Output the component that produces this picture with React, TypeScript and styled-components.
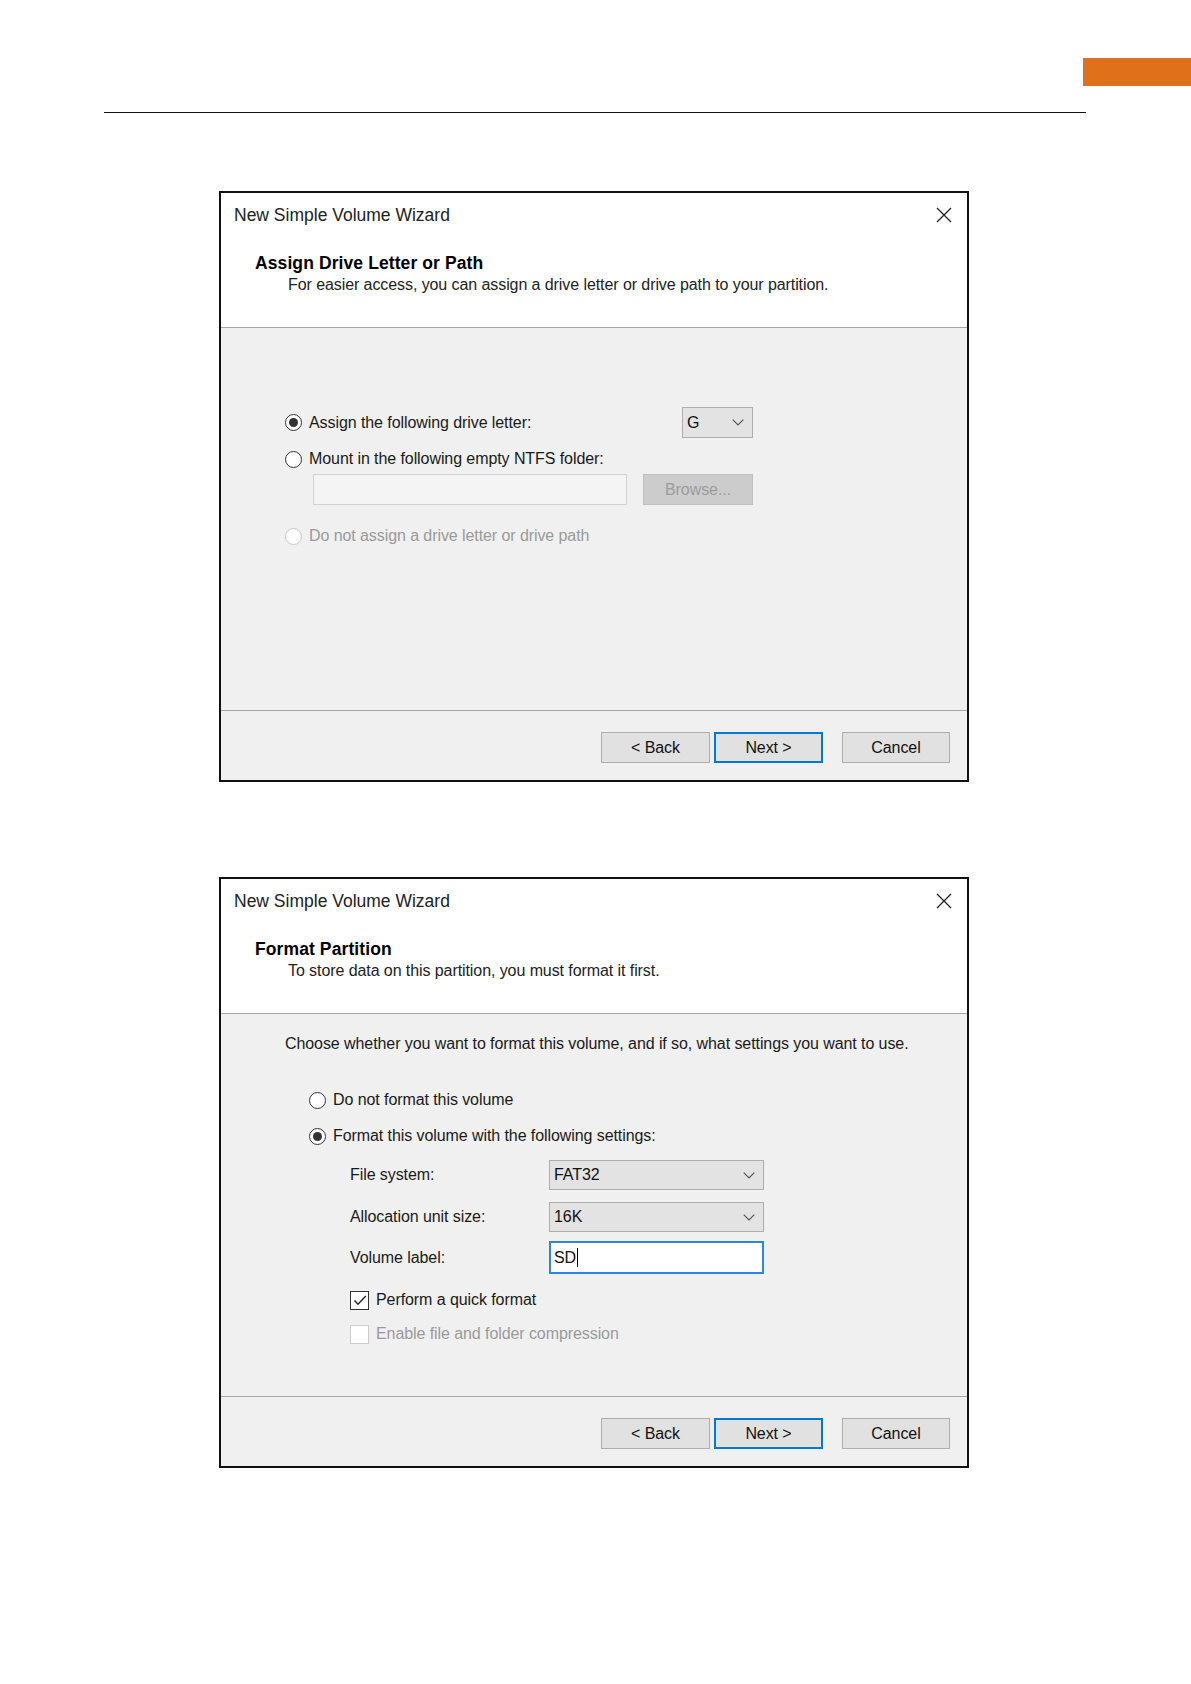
import React from 'react';
import styled, { createGlobalStyle } from 'styled-components';

const GlobalStyle = createGlobalStyle`
  html, body {
    margin: 0;
    padding: 0;
    background: #fff;
  }
  body {
    font-family: "Liberation Sans", Arial, sans-serif;
    color: #1a1a1a;
  }
`;

const Page = styled.div`
  padding: 58px 0 120px;
`;

const TopBar = styled.div`
  display: flex;
  justify-content: flex-end;
`;

const Accent = styled.div`
  width: 108px;
  height: 28px;
  background: #e07019;
`;

const Rule = styled.hr`
  margin: 26px 0 0 104px;
  width: 982px;
  height: 0;
  border: none;
  border-top: 1px solid #111;
`;

const Dialog = styled.section<{ $gap: number }>`
  box-sizing: border-box;
  width: 750px;
  height: 591px;
  margin: ${p => p.$gap}px 0 0 219px;
  border: 2px solid #111;
  background: #f0f0f0;
  display: flex;
  flex-direction: column;
  font-size: 16px;
  line-height: 20px;
  letter-spacing: -0.08px;
`;

const Header = styled.header`
  box-sizing: border-box;
  height: 135px;
  flex-shrink: 0;
  padding: 12px 15px 0 13px;
  background: #fff;
  border-bottom: 1px solid #a6a6a6;
`;

const TitleRow = styled.div`
  display: flex;
  align-items: center;
  justify-content: space-between;
  height: 20px;
`;

const Title = styled.div`
  font-size: 17.5px;
  letter-spacing: 0;
  color: #222;
`;

const Heading = styled.div`
  margin: 28px 0 0 21px;
  font-size: 17.5px;
  letter-spacing: 0.1px;
  font-weight: bold;
  color: #000;
`;

const Subheading = styled.div`
  margin: 2px 0 0 54px;
  color: #222;
`;

const Body = styled.div<{ $top?: number }>`
  flex: 1;
  padding: ${p => p.$top ?? 0}px 0 0 64px;
  color: #1a1a1a;
`;

const Row = styled.div<{ $mt: number; $indent?: number }>`
  display: flex;
  align-items: center;
  min-height: 22px;
  margin-top: ${p => p.$mt}px;
  padding-left: ${p => p.$indent ?? 0}px;
`;

const Option = styled.label<{ $disabled?: boolean; $w?: number }>`
  display: flex;
  align-items: center;
  gap: 7px;
  height: 22px;
  width: ${p => (p.$w ? `${p.$w}px` : 'auto')};
  flex-shrink: 0;
  color: ${p => (p.$disabled ? '#9a9a9a' : '#1a1a1a')};
`;

const RadioDot = styled.span<{ $checked?: boolean; $disabled?: boolean }>`
  box-sizing: border-box;
  width: 17px;
  height: 17px;
  border-radius: 50%;
  border: 1px solid ${p => (p.$disabled ? '#c8c8c8' : '#333')};
  background: #fff;
  display: inline-flex;
  align-items: center;
  justify-content: center;
  flex-shrink: 0;
  &::after {
    content: '';
    width: 9px;
    height: 9px;
    border-radius: 50%;
    background: #333;
    display: ${p => (p.$checked ? 'block' : 'none')};
  }
`;

const Box = styled.span<{ $disabled?: boolean }>`
  box-sizing: border-box;
  width: 19px;
  height: 19px;
  border: 1px solid ${p => (p.$disabled ? '#cccccc' : '#333')};
  background: #fff;
  display: inline-flex;
  align-items: center;
  justify-content: center;
  flex-shrink: 0;
`;

const Combo = styled.div<{ $w: number; $h: number }>`
  box-sizing: border-box;
  width: ${p => p.$w}px;
  height: ${p => p.$h}px;
  display: flex;
  align-items: center;
  justify-content: space-between;
  padding: 0 8px 0 4px;
  background: #e3e3e3;
  border: 1px solid #adadad;
  color: #111;
`;

const TextBox = styled.div<{ $w: number; $h: number; $focused?: boolean; $disabled?: boolean }>`
  box-sizing: border-box;
  width: ${p => p.$w}px;
  height: ${p => p.$h}px;
  display: flex;
  align-items: center;
  padding-left: 3px;
  background: ${p => (p.$disabled ? '#f4f4f4' : '#fff')};
  border: ${p => (p.$focused ? '2px solid #2f86d6' : '1px solid #d2d2d2')};
  color: #111;
`;

const Caret = styled.span`
  display: inline-block;
  width: 1px;
  height: 19px;
  margin-left: 1px;
  background: #000;
`;

const FieldLabel = styled.div`
  width: 199px;
  flex-shrink: 0;
`;

const Button = styled.div<{ $primary?: boolean; $disabled?: boolean; $w?: number; $ml?: number }>`
  box-sizing: border-box;
  width: ${p => p.$w ?? 109}px;
  height: 31px;
  margin-left: ${p => p.$ml ?? 0}px;
  display: flex;
  align-items: center;
  justify-content: center;
  background: ${p => (p.$disabled ? '#cccccc' : '#e1e1e1')};
  border: ${p => (p.$primary ? '2px solid #0078d7' : `1px solid ${p.$disabled ? '#bfbfbf' : '#adadad'}`)};
  color: ${p => (p.$disabled ? '#9c9c9c' : '#111')};
`;

const Footer = styled.footer`
  box-sizing: border-box;
  height: 70px;
  flex-shrink: 0;
  display: flex;
  justify-content: flex-end;
  align-items: flex-start;
  padding: 21px 17px 0 0;
  border-top: 1px solid #a6a6a6;
`;

const CloseIcon = () => (
  <svg width="16" height="16" viewBox="0 0 16 16">
    <path d="M1 1 L15 15 M15 1 L1 15" stroke="#222" strokeWidth="1.3" fill="none" />
  </svg>
);

const Chevron = () => (
  <svg width="12" height="7" viewBox="0 0 12 7">
    <polyline points="0.7,0.7 6,6 11.3,0.7" stroke="#555" strokeWidth="1.2" fill="none" />
  </svg>
);

const Check = () => (
  <svg width="14" height="11" viewBox="0 0 14 11">
    <polyline points="1.5,5.5 5,9.2 12.8,1" stroke="#222" strokeWidth="1.4" fill="none" />
  </svg>
);

const Radio = ({ label, checked, disabled, w }: { label: string; checked?: boolean; disabled?: boolean; w?: number }) => (
  <Option $disabled={disabled} $w={w}>
    <RadioDot $checked={checked} $disabled={disabled} />
    {label}
  </Option>
);

const CheckOption = ({ label, checked, disabled }: { label: string; checked?: boolean; disabled?: boolean }) => (
  <Option $disabled={disabled}>
    <Box $disabled={disabled}>{checked && <Check />}</Box>
    {label}
  </Option>
);

const WizardFrame = ({ gap, heading, sub, body, bodyTop }: { gap: number; heading: string; sub: string; body: React.ReactNode; bodyTop?: number }) => (
  <Dialog $gap={gap}>
    <Header>
      <TitleRow>
        <Title>New Simple Volume Wizard</Title>
        <CloseIcon />
      </TitleRow>
      <Heading>{heading}</Heading>
      <Subheading>{sub}</Subheading>
    </Header>
    <Body $top={bodyTop}>{body}</Body>
    <Footer>
      <Button>&lt; Back</Button>
      <Button $primary $ml={4}>Next &gt;</Button>
      <Button $ml={19} $w={108}>Cancel</Button>
    </Footer>
  </Dialog>
);

const App = () => (
  <Page>
    <GlobalStyle />
    <TopBar>
      <Accent />
    </TopBar>
    <Rule />

    <WizardFrame
      gap={78}
      heading="Assign Drive Letter or Path"
      sub="For easier access, you can assign a drive letter or drive path to your partition."
      body={
        <>
          <Row $mt={79}>
            <Radio label="Assign the following drive letter:" checked w={397} />
            <Combo $w={71} $h={31}>
              <span>G</span>
              <Chevron />
            </Combo>
          </Row>
          <Row $mt={10}>
            <Radio label="Mount in the following empty NTFS folder:" />
          </Row>
          <Row $mt={4} $indent={28}>
            <TextBox $w={314} $h={31} $disabled />
            <Button $disabled $w={110} $ml={16}>Browse...</Button>
          </Row>
          <Row $mt={20}>
            <Radio label="Do not assign a drive letter or drive path" disabled />
          </Row>
        </>
      }
    />

    <WizardFrame
      gap={95}
      heading="Format Partition"
      sub="To store data on this partition, you must format it first."
      bodyTop={20}
      body={
        <>
          <div>Choose whether you want to format this volume, and if so, what settings you want to use.</div>
          <Row $mt={35} $indent={24}>
            <Radio label="Do not format this volume" />
          </Row>
          <Row $mt={14} $indent={24}>
            <Radio label="Format this volume with the following settings:" checked />
          </Row>
          <Row $mt={13} $indent={65}>
            <FieldLabel>File system:</FieldLabel>
            <Combo $w={215} $h={30}>
              <span>FAT32</span>
              <Chevron />
            </Combo>
          </Row>
          <Row $mt={12} $indent={65}>
            <FieldLabel>Allocation unit size:</FieldLabel>
            <Combo $w={215} $h={30}>
              <span>16K</span>
              <Chevron />
            </Combo>
          </Row>
          <Row $mt={9} $indent={65}>
            <FieldLabel>Volume label:</FieldLabel>
            <TextBox $w={215} $h={33} $focused>
              SD<Caret />
            </TextBox>
          </Row>
          <Row $mt={15} $indent={65}>
            <CheckOption label="Perform a quick format" checked />
          </Row>
          <Row $mt={12} $indent={65}>
            <CheckOption label="Enable file and folder compression" disabled />
          </Row>
        </>
      }
    />
  </Page>
);

export default App;
